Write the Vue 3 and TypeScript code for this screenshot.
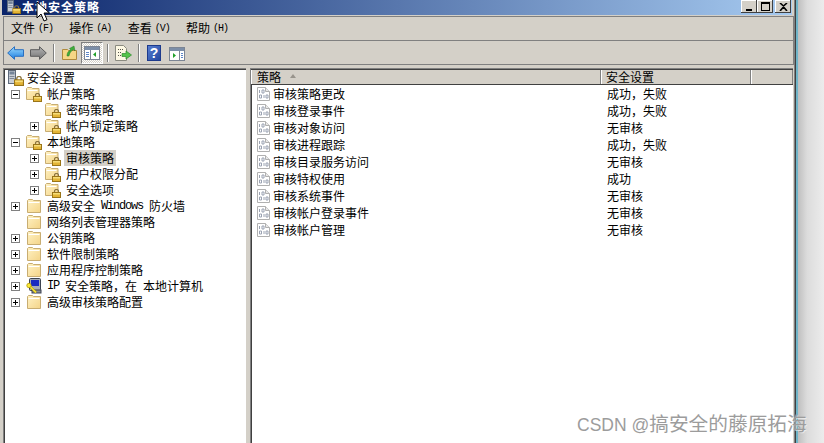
<script setup lang="ts">
interface Row { text: string; level: string; exp: string; icon: string; sel?: boolean }
const menus = [
  { zh: '文件', key: '(F)' },
  { zh: '操作', key: '(A)' },
  { zh: '查看', key: '(V)' },
  { zh: '帮助', key: '(H)' },
]
const tree: Row[] = [
  { text: '安全设置', level: 'root', exp: '', icon: 'i-server' },
  { text: '帐户策略', level: 'lv0', exp: '-', icon: 'i-lockfolder' },
  { text: '密码策略', level: 'lv1', exp: '', icon: 'i-lockfolder' },
  { text: '帐户锁定策略', level: 'lv1', exp: '+', icon: 'i-lockfolder' },
  { text: '本地策略', level: 'lv0', exp: '-', icon: 'i-lockfolder' },
  { text: '审核策略', level: 'lv1', exp: '+', icon: 'i-lockfolder', sel: true },
  { text: '用户权限分配', level: 'lv1', exp: '+', icon: 'i-lockfolder' },
  { text: '安全选项', level: 'lv1', exp: '+', icon: 'i-lockfolder' },
  { text: '高级安全 Windows 防火墙', level: 'lv0', exp: '+', icon: 'i-folder' },
  { text: '网络列表管理器策略', level: 'lv0', exp: '', icon: 'i-folder' },
  { text: '公钥策略', level: 'lv0', exp: '+', icon: 'i-folder' },
  { text: '软件限制策略', level: 'lv0', exp: '+', icon: 'i-folder' },
  { text: '应用程序控制策略', level: 'lv0', exp: '+', icon: 'i-folder' },
  { text: 'IP 安全策略\uFF0C在 本地计算机', level: 'lv0', exp: '+', icon: 'i-ip' },
  { text: '高级审核策略配置', level: 'lv0', exp: '+', icon: 'i-folder' },
]
const policies = [
  ['审核策略更改', '成功\uFF0C失败'],
  ['审核登录事件', '成功\uFF0C失败'],
  ['审核对象访问', '无审核'],
  ['审核进程跟踪', '成功\uFF0C失败'],
  ['审核目录服务访问', '无审核'],
  ['审核特权使用', '成功'],
  ['审核系统事件', '无审核'],
  ['审核帐户登录事件', '无审核'],
  ['审核帐户管理', '无审核'],
]
function segs(t: string): { s: string; lat: boolean }[] {
  return t.split(/([A-Za-z ]+)/).filter(Boolean).map((s) => ({ s, lat: /^[A-Za-z ]+$/.test(s) }))
}
</script>

<template>
  <div class="desk">
    <svg class="defs" width="0" height="0" aria-hidden="true">
      <defs>
        <linearGradient id="gFolder" x1="0" y1="0" x2="1" y2="1">
          <stop offset="0" stop-color="#fff2c4" />
          <stop offset="1" stop-color="#f4d488" />
        </linearGradient>
        <linearGradient id="gBlue" x1="0" y1="0" x2="0" y2="1">
          <stop offset="0" stop-color="#9cdcff" />
          <stop offset="1" stop-color="#1a7ce0" />
        </linearGradient>
        <linearGradient id="gGray" x1="0" y1="0" x2="0" y2="1">
          <stop offset="0" stop-color="#b4b4b4" />
          <stop offset="1" stop-color="#757575" />
        </linearGradient>
        <linearGradient id="gHelp" x1="0" y1="0" x2="1" y2="1">
          <stop offset="0" stop-color="#5c82d4" />
          <stop offset="1" stop-color="#20439c" />
        </linearGradient>
        <symbol id="s-lock" viewBox="0 0 9 9">
          <path d="M2.5 4V2.4a2 2 0 0 1 4 0V4" fill="none" stroke="#8a7440" stroke-width="1.2" />
          <rect x=".5" y="3.5" width="8" height="5" fill="#e3b436" stroke="#9a7518" />
          <rect x="1" y="4" width="7" height="1.5" fill="#f6dc78" />
        </symbol>
        <symbol id="i-folder" viewBox="0 0 16 16">
          <path d="M1.5 14.5V2.5l1-1h4l1 1h7v12z" fill="url(#gFolder)" stroke="#c8ad72" />
          <path d="M2.5 4.5h11" stroke="#fff" />
        </symbol>
        <symbol id="i-lockfolder" viewBox="0 0 16 16">
          <path d="M.5 13.5V2.5l1-1h4l1 1h6.500v11z" fill="url(#gFolder)" stroke="#c8ad72" />
          <path d="M1.500 4.500h10" stroke="#fff" />
          <use href="#s-lock" x="7" y="7" width="9" height="9" />
        </symbol>
        <symbol id="i-server" viewBox="0 0 16 16">
          <rect x=".5" y=".5" width="7" height="13" fill="#c9ced6" stroke="#5f6b7c" />
          <rect x="1.500" y="1.500" width="5" height="3" fill="#74849a" />
          <rect x="1.500" y="6" width="5" height="1" fill="#7d8796" />
          <rect x="1.500" y="8" width="5" height="1" fill="#7d8796" />
          <use href="#s-lock" x="6" y="6" width="10" height="10" />
        </symbol>
        <symbol id="i-ip" viewBox="0 0 16 16">
          <rect x="3.500" y=".5" width="11" height="12" rx="1" fill="#a8adb8" stroke="#3c4250" />
          <rect x="5" y="2" width="8" height="6" fill="#1a2bc0" />
          <rect x="6" y="12" width="9" height="3" fill="#8a8f9c" stroke="#3c4250" />
          <path d="M4 8.500l6 6" stroke="#b89c00" stroke-width="2.400" />
          <path d="M4 8.500l6 6" stroke="#f8e83c" stroke-width="1.200" />
          <circle cx="3" cy="7.500" r="2.200" fill="#f8e83c" stroke="#b89c00" stroke-width=".8" />
        </symbol>
        <symbol id="i-log" viewBox="0 0 13 14">
          <path d="M.5.500h8l4 4v9H.5z" fill="#fff" stroke="#b0b0b0" />
          <path d="M8.500.500v4h4" fill="#e8e8e8" stroke="#b0b0b0" />
          <path d="M2.500 3v3M5 3h2v3H5zM2.500 8h2v3h-2zM7 8v3M9 8h2v3H9z" fill="none" stroke="#9aa2b2" />
        </symbol>
      </defs>
    </svg>

    <div class="win">
      <header class="title">
        <svg class="title-ico"><use href="#i-server" /></svg>
        <span class="title-text">本地安全策略</span>
        <div class="caps">
          <button class="cap cap-min"><i class="bar"></i></button>
          <button class="cap cap-max"><i class="box"></i></button>
          <button class="cap cap-close">
            <svg width="9" height="8" viewBox="0 0 9 8"><path d="M1 0l3.500 3L8 0M1 8l3.500-4L8 8" fill="none" stroke="#000" stroke-width="1.600" /></svg>
          </button>
        </div>
      </header>

      <div class="bars">
        <nav class="menu">
          <span v-for="m in menus" :key="m.zh" class="menu-item">{{ m.zh }}<span class="key">{{ m.key }}</span></span>
        </nav>
        <div class="tools">
          <svg class="t back" width="17" height="14" viewBox="0 0 17 14"><path d="M.7 7L7.500.7v3h9v6.600h-9v3z" fill="url(#gBlue)" stroke="#2a6fc0" /></svg>
          <svg class="t fwd" width="17" height="14" viewBox="0 0 17 14"><path d="M16.300 7L9.500.7v3h-9v6.600h9v3z" fill="url(#gGray)" stroke="#5c5c5c" /></svg>
          <i class="sep sep1"></i>
          <svg class="t up" width="15" height="15" viewBox="0 0 15 15">
            <path d="M.5 14.500V4.500h5l1 1h8v9z" fill="#f6d684" stroke="#b08a3c" />
            <path d="M5 11c0-3 1-5 4-6L7.500 3.500 12 1l1 5-1.500-1.500C9 6 7.500 8 7 11z" fill="#3fae3a" stroke="#2a7a28" stroke-width=".5" />
          </svg>
          <span class="pressed">
            <svg width="16" height="14" viewBox="0 0 16 14">
              <rect x=".5" y=".5" width="15" height="13" fill="#fff" stroke="#7c8594" />
              <rect x="1" y="1" width="14" height="3" fill="#7c8ea8" />
              <path d="M6.500 4v9" stroke="#7c8594" />
              <rect x="2" y="6" width="3" height="1" fill="#5d86c8" />
              <rect x="2" y="8" width="3" height="1" fill="#5d86c8" />
              <rect x="2" y="10" width="3" height="1" fill="#5d86c8" />
              <path d="M12 6v5L9 8.500z" fill="#21a02a" />
            </svg>
          </span>
          <i class="sep sep2"></i>
          <svg class="t export" width="17" height="16" viewBox="0 0 17 16">
            <path d="M.5.500h8l3 3v12H.5z" fill="#fdf8e4" stroke="#8a8a80" />
            <path d="M3 4.500h5M3 7.500h4M3 10.500h4" stroke="#55554d" stroke-dasharray="1 1" />
            <path d="M7 8.500h4V6l5.500 4-5.500 4v-2.500H7z" fill="#54c44a" stroke="#2e8c2e" stroke-width=".7" />
          </svg>
          <i class="sep sep3"></i>
          <svg class="t help" width="14" height="16" viewBox="0 0 14 16">
            <rect width="14" height="16" fill="url(#gHelp)" />
            <rect x=".5" y=".5" width="13" height="15" fill="none" stroke="#1d3a8c" />
            <text x="7" y="13" text-anchor="middle" class="q">?</text>
          </svg>
          <svg class="t action" width="16" height="14" viewBox="0 0 16 14">
            <rect x=".5" y=".5" width="15" height="13" fill="#fff" stroke="#7c8594" />
            <rect x="1" y="1" width="14" height="3" fill="#7c8ea8" />
            <path d="M10.500 4v9" stroke="#7c8594" />
            <rect x="12" y="6" width="2" height="1" fill="#5d86c8" />
            <rect x="12" y="8" width="2" height="1" fill="#5d86c8" />
            <rect x="12" y="10" width="2" height="1" fill="#5d86c8" />
            <path d="M4 6v5l3-2.500z" fill="#21a02a" />
          </svg>
        </div>
      </div>

      <div class="panes">
        <section class="pane left">
          <div v-for="r in tree" :key="r.text" class="row" :class="r.level">
            <span v-if="r.level !== 'root'" class="exp" :class="{ none: !r.exp }">
              <svg v-if="r.exp" width="9" height="9" viewBox="0 0 9 9">
                <rect x=".5" y=".5" width="8" height="8" fill="#fff" stroke="#808080" />
                <path d="M2 4.500h5" stroke="#000" />
                <path v-if="r.exp === '+'" d="M4.500 2v5" stroke="#000" />
              </svg>
            </span>
            <svg class="node-ico"><use :href="'#' + r.icon" /></svg>
            <span class="label" :class="{ sel: r.sel }"><span v-for="(p, i) in segs(r.text)" :key="i" class="seg" :class="{ lat: p.lat }">{{ p.s }}</span></span>
          </div>
        </section>

        <section class="pane right">
          <div class="thead">
            <div class="th c1">策略<i class="sort"></i></div>
            <div class="th c2">安全设置</div>
            <div class="th c3"></div>
          </div>
          <div v-for="p in policies" :key="p[0]" class="prow">
            <div class="c1 cell"><svg class="log"><use href="#i-log" /></svg>{{ p[0] }}</div>
            <div class="c2 cell val">{{ p[1] }}</div>
          </div>
        </section>
      </div>
    </div>
    <div class="edge"></div>

    <svg class="cursor" width="14" height="22" viewBox="0 0 14 22">
      <path d="M1 1v16l4-4 3 7 3-1.300-3-6.700h5.500z" fill="#fff" stroke="#000" />
    </svg>
    <div class="mark"><span class="mark-l">CSDN @</span>搞安全的藤原拓海</div>
  </div>
</template>

<style>
html, body { margin: 0; padding: 0; overflow: hidden; }
</style>

<style scoped>
.desk {
  position: relative;
  display: flex;
  width: 824px;
  height: 443px;
  overflow: hidden;
  background: #fff;
  font-family: "Noto Sans CJK SC", "Liberation Sans", sans-serif;
  font-size: 12px;
  color: #000;
}
.defs { position: absolute; }
.win {
  display: flex;
  flex-direction: column;
  width: 795px;
  flex: none;
  background: #d4d0c8;
  box-shadow: inset -1px 0 0 #808080;
}
.edge {
  flex: 1;
  border-left: 1px solid #404040;
  box-shadow: inset 2px 0 0 #6fb4c8;
  background: linear-gradient(90deg, #b9b9b9 0%, #dcdcdc 40%, #ececec 100%);
}

.title {
  display: flex;
  align-items: flex-start;
  height: 15px;
  margin-left: 2px;
  margin-right: 3px;
  background: linear-gradient(90deg, #0a246a 0%, #a6caf0 100%);
}
.title-ico { width: 16px; height: 14px; margin-left: 4px; flex: none; }
.title-text {
  color: #fff;
  font-weight: 700;
  font-size: 12px;
  letter-spacing: 1px;
  line-height: 14px;
}
.caps { display: flex; margin-left: auto; margin-right: 1px; }
.cap {
  width: 16px;
  height: 13px;
  padding: 0;
  border: 0;
  background: #d4d0c8;
  box-shadow: inset -1px -1px 0 #404040, inset 1px 1px 0 #fff;
  display: flex;
  align-items: center;
  justify-content: center;
}
.cap-close { margin-left: 2px; }
.bar { display: block; width: 6px; height: 2px; background: #000; margin-top: 6px; }
.box { display: block; width: 9px; height: 9px; border: 1px solid #000; border-top-width: 2px; box-sizing: border-box; }

.bars {
  margin: 1px 1px 0 3px;
  border: 1px solid #808080;
}
.menu {
  display: flex;
  align-items: center;
  gap: 16.300px;
  box-sizing: border-box;
  height: 24px;
  padding: 0 0 2px 7px;
  border-bottom: 1px solid #808080;
}
.menu-item { display: flex; align-items: center; line-height: 16px; }
.key {
  margin-left: 3px;
  padding-top: 2px;
  font-family: "Liberation Mono", monospace;
  font-size: 10px;
  letter-spacing: -1px;
}
.tools {
  display: flex;
  align-items: center;
  height: 23px;
  padding-left: 3px;
}
.t { flex: none; }
.fwd { margin-left: 6px; }
.sep { display: block; flex: none; width: 1px; height: 18px; background: #808080; box-shadow: 1px 0 0 #fff; }
.sep1 { margin-left: 6px; }
.up { margin-left: 8px; }
.pressed {
  flex: none;
  display: flex;
  align-items: center;
  justify-content: center;
  width: 22px;
  height: 22px;
  margin-left: 4px;
  box-sizing: border-box;
  border: 1px solid;
  border-color: #808080 #fff #fff #808080;
  background: repeating-conic-gradient(#fff 0 25%, #d4d0c8 0 50%) 0 0 / 2px 2px;
}
.sep2 { margin-left: 4px; }
.export { margin-left: 7px; }
.sep3 { margin-left: 6px; }
.help { margin-left: 8px; }
.action { margin-left: 8px; margin-top: 2px; }
.q { font: 700 14px "Liberation Sans", sans-serif; fill: #fff; }

.panes {
  flex: 1;
  min-height: 0;
  display: flex;
  gap: 4px;
  margin: 3px 2px 0 3px;
}
.pane {
  background: #fff;
  box-shadow: inset 1px 1px 0 #808080, inset 2px 2px 0 #404040;
  padding: 2px 0 0 1px;
  box-sizing: border-box;
  overflow: hidden;
}
.left { width: 243px; flex: none; padding-left: 0; }
.right { flex: 1; min-width: 0; }

.row { display: flex; align-items: center; height: 16px; white-space: pre; }
.root { padding-left: 5px; }
.lv0 { padding-left: 8px; }
.lv1 { padding-left: 27px; }
.exp { width: 9px; height: 9px; flex: none; margin-right: 6px; display: block; line-height: 0; }
.node-ico { width: 16px; height: 16px; flex: none; }
.label { margin-left: 3px; padding: 0 2px; height: 16px; line-height: 16px; }
.root .label { margin-left: 1px; }
.sel { background: #d4d0c8; }
.seg { display: inline-block; height: 16px; line-height: 16px; vertical-align: top; }
.lat { font-family: "Liberation Mono", monospace; font-size: 12px; letter-spacing: -1.2px; }

.thead {
  display: flex;
  height: 15px;
  box-sizing: border-box;
  background: #d4d0c8;
  border-bottom: 1px solid #404040;
}
.th {
  box-sizing: border-box;
  height: 14px;
  line-height: 14px;
  padding-left: 4px;
  border-left: 1px solid #fff;
  border-right: 1px solid #808080;
  position: relative;
}
.th.c1 { padding-left: 5px; }
.c1 { width: 350px; flex: none; }
.c2 { width: 150px; flex: none; }
.c3 { flex: 1; }
.sort {
  position: absolute;
  left: 38px;
  top: 4px;
  width: 0;
  height: 0;
  border: 3.5px solid transparent;
  border-top-width: 0;
  border-bottom: 4px solid #98948c;
}
.prow { display: flex; height: 17px; line-height: 17px; }
.cell { display: flex; align-items: center; }
.log { width: 13px; height: 14px; margin: 0 3px 0 6px; flex: none; }
.val { padding-left: 6px; box-sizing: border-box; }

.cursor { position: absolute; left: 36px; top: 1px; }
.mark {
  position: absolute;
  left: 577px;
  top: 410px;
  font-size: 19.700px;
  line-height: 26px;
  color: #9c9c9c;
  white-space: pre;
  text-shadow: 1px 1px 0 rgba(255, 255, 255, 0.5);
}
.mark-l { font-family: "Liberation Sans", sans-serif; font-size: 17.500px; }
</style>
